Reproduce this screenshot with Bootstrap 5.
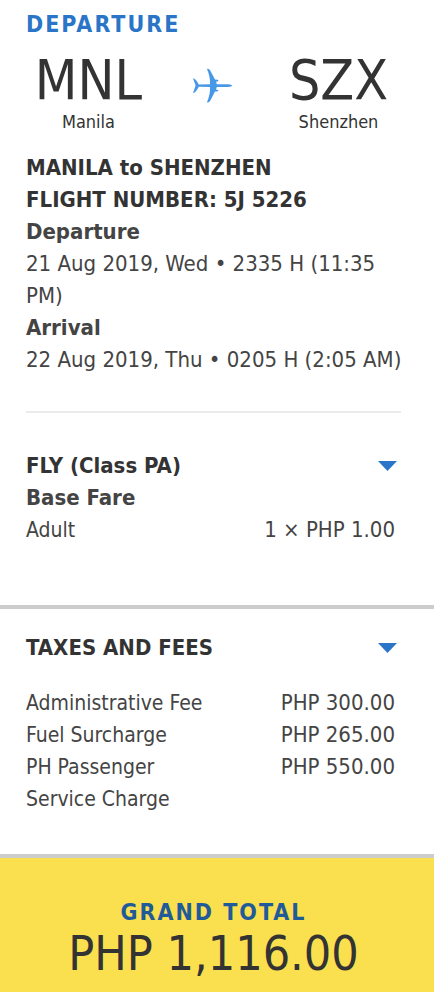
<!DOCTYPE html>
<html lang="en">
<head>
<meta charset="utf-8">
<meta name="viewport" content="width=device-width, initial-scale=1">
<title>Flight summary</title>
<link href="https://cdn.jsdelivr.net/npm/bootstrap@5.3.0/dist/css/bootstrap.min.css" rel="stylesheet">
<style>
  body { font-family: Tahoma, "DejaVu Sans Condensed", "DejaVu Sans", sans-serif; font-stretch: condensed; font-size: 22px; line-height: 32px; color: #444; }
  h1, h2, h3, .place-code, .total-amount { color: #333; }
  h1, h2, h3, h4 { font-size: 22px; line-height: 32px; font-weight: 700; margin: 0; }
  .section-pad { padding-left: 26px; padding-right: 33px; }
  h2.eyebrow { color: #2a75c7; font-size: 23px; letter-spacing: 2px; }
  .place-code { font-size: 55px; line-height: 64px; }
  .place-name { font-size: 18px; line-height: 20px; color: #333; }
  .route { padding-top: 8px; padding-bottom: 20px; }
  .plane { padding-top: 20px; padding-right: 4px; }
  .itinerary { margin-right: -4px; }
  .trip-rule { border-top: 2px solid #ebebeb; margin: 35px 0 37px; opacity: 1; }
  .fare { padding-bottom: 59px; }
  .fees { border-top: 4px solid #ccc; padding-top: 23px; padding-bottom: 39px; }
  .fee-list { padding-top: 23px; }
  .fee-label { max-width: 190px; font-size: 21px; }
  .price { padding-right: 6px; }
  .toggle svg { width: 19px; height: 10px; }
  .total { border-top: 4px solid #ccc; background: #fadf4f; padding-top: 38px; padding-bottom: 12px; }
  .total h2.eyebrow { color: #1f5b99; }
  .total-amount { font-size: 48px; line-height: 50px; }
</style>
<script src="https://cdn.jsdelivr.net/npm/bootstrap@5.3.0/dist/js/bootstrap.bundle.min.js"></script>
</head>
<body class="bg-white d-flex flex-column min-vh-100">
<main class="d-flex flex-column flex-grow-1">
  <section class="section-pad pt-2">
    <h2 class="eyebrow">DEPARTURE</h2>
    <div class="route row g-0 text-center">
      <div class="col-4">
        <div class="place-code">MNL</div>
        <div class="place-name">Manila</div>
      </div>
      <div class="col-4 plane">
        <svg width="42" height="36" viewBox="0 0 42 36" fill="#4799e8" aria-hidden="true" class="d-block mx-auto">
          <path d="M2 10.2 Q4.5 10.2 7.8 16.5 L19 16.3 Q19.4 9 16 1 Q18 .2 19.5 3 L24 11.6 Q27.4 11.6 27.4 12.7 Q27.4 13.6 25 13.8 L25.8 16.2 L37 16.2 Q41 16.5 41 17.6 Q41 18.7 37 19 L25.8 19 L25 21.4 Q27.4 21.6 27.4 22.5 Q27.4 23.6 24 23.6 L19.5 32.2 Q18 35 16 34.2 Q19.4 26 19 18.9 L7.8 18.7 Q4.5 25 2 25 Q3.8 20 4.6 17.6Z"/>
        </svg>
      </div>
      <div class="col-4">
        <div class="place-code">SZX</div>
        <div class="place-name">Shenzhen</div>
      </div>
    </div>
    <div class="itinerary">
      <h3>MANILA to SHENZHEN</h3>
      <h3>FLIGHT NUMBER: 5J 5226</h3>
      <h4>Departure</h4>
      <div>21 Aug 2019, Wed • 2335 H (11:35 PM)</div>
      <h4>Arrival</h4>
      <div>22 Aug 2019, Thu • 0205 H (2:05 AM)</div>
    </div>
    <hr class="trip-rule">
  </section>

  <section class="section-pad fare">
    <div class="d-flex justify-content-between align-items-center">
      <h2>FLY (Class PA)</h2>
      <button type="button" class="toggle btn border-0 p-0 pe-1 d-flex" data-bs-toggle="collapse" data-bs-target="#fare-lines" aria-expanded="true" aria-controls="fare-lines" aria-label="Toggle fare details">
        <svg viewBox="0 0 19 10" fill="#2a75c7" aria-hidden="true"><path d="M0 0H19L9.5 10Z"/></svg>
      </button>
    </div>
    <div id="fare-lines" class="collapse show">
      <h4>Base Fare</h4>
      <div class="d-flex justify-content-between">
        <span class="fee-label">Adult</span>
        <span class="price">1 × PHP 1.00</span>
      </div>
    </div>
  </section>

  <section class="section-pad fees">
    <div class="d-flex justify-content-between align-items-center">
      <h2>TAXES AND FEES</h2>
      <button type="button" class="toggle btn border-0 p-0 pe-1 d-flex" data-bs-toggle="collapse" data-bs-target="#fee-lines" aria-expanded="true" aria-controls="fee-lines" aria-label="Toggle taxes and fees">
        <svg viewBox="0 0 19 10" fill="#2a75c7" aria-hidden="true"><path d="M0 0H19L9.5 10Z"/></svg>
      </button>
    </div>
    <div id="fee-lines" class="collapse show">
      <div class="fee-list">
        <div class="d-flex justify-content-between">
          <span class="fee-label">Administrative Fee</span>
          <span class="price">PHP 300.00</span>
        </div>
        <div class="d-flex justify-content-between">
          <span class="fee-label">Fuel Surcharge</span>
          <span class="price">PHP 265.00</span>
        </div>
        <div class="d-flex justify-content-between">
          <span class="fee-label">PH Passenger Service Charge</span>
          <span class="price">PHP 550.00</span>
        </div>
      </div>
    </div>
  </section>

  <section class="total section-pad text-center flex-grow-1">
    <h2 class="eyebrow">GRAND TOTAL</h2>
    <div class="total-amount">PHP 1,116.00</div>
  </section>
</main>
</body>
</html>
